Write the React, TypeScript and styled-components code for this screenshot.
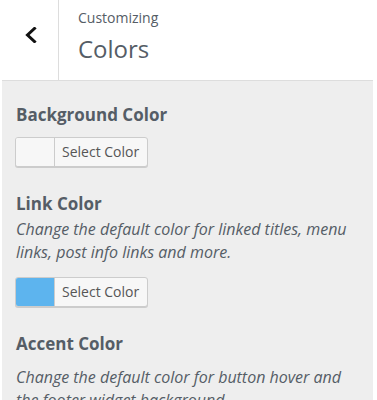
import React from "react";
import styled, { createGlobalStyle } from "styled-components";

const Global = createGlobalStyle`
  html, body { margin: 0; padding: 0; background: #fff; }
  body { font-family: "Open Sans", "Noto Sans", Arial, sans-serif; overflow: hidden; }
`;

const Panel = styled.div`
  margin-left: 2px;
  width: 371px;
  display: flex;
  flex-direction: column;
`;

const Header = styled.header`
  flex: none;
  display: flex;
  height: 80px;
  background: #fff;
  border-bottom: 1px solid #dddddd;
`;

const BackButton = styled.button`
  width: 57px;
  flex: none;
  padding: 0 0 10px 2px;
  margin: 0;
  border: 0;
  border-right: 1px solid #dddddd;
  background: #fff;
  display: flex;
  align-items: center;
  justify-content: center;
`;

const TitleBlock = styled.div`
  padding: 8px 0 0 19px;
  display: flex;
  flex-direction: column;
`;

const Crumb = styled.span`
  font-size: 14px;
  line-height: 20px;
  color: #555d66;
`;

const Title = styled.h1`
  margin: 5px 0 0;
  font-size: 24px;
  line-height: 32px;
  font-weight: 400;
  color: #555d66;
`;

const Content = styled.div`
  background: #eeeeee;
  padding: 22px 13px 40px;
  display: flex;
  flex-direction: column;
  gap: 25px;
`;

const Section = styled.section`
  display: flex;
  flex-direction: column;
`;

const Heading = styled.h2`
  margin: 0 0 0 1px;
  font-size: 17px;
  line-height: 24px;
  font-weight: 700;
  color: #555d66;
`;

const Description = styled.p<{ $offset: number }>`
  margin: ${(p) => p.$offset}px 0 3px 1px;
  font-size: 16px;
  line-height: 23px;
  font-style: italic;
  color: #555d66;
`;

const ColorButton = styled.button`
  margin-top: 10px;
  align-self: flex-start;
  display: flex;
  height: 30px;
  padding: 0;
  border: 1px solid #cccccc;
  border-radius: 3px;
  box-shadow: 0 1px 0 #cccccc;
  background: #f7f7f7;
  overflow: hidden;
  font-family: inherit;
`;

const Swatch = styled.span<{ $color: string }>`
  width: 38px;
  background: ${(p) => p.$color};
  border-right: 1px solid #cccccc;
`;

const ButtonLabel = styled.span`
  padding: 0 8px 0 7px;
  font-size: 14px;
  line-height: 28px;
  color: #555555;
`;

const Chevron = () => (
  <svg width="12" height="16" viewBox="0 0 12 16">
    <polyline
      points="9.5,1.5 2.5,8 9.5,14.5"
      fill="none"
      stroke="#111"
      strokeWidth="3"
      strokeLinecap="square"
    />
  </svg>
);

type Item = { title: string; desc?: string; color: string; offset: number };

const items: Item[] = [
  { title: "Background Color", color: "#f7f7f7", offset: 0 },
  {
    title: "Link Color",
    desc: "Change the default color for linked titles, menu links, post info links and more.",
    color: "#5db4ee",
    offset: 2,
  },
  {
    title: "Accent Color",
    desc: "Change the default color for button hover and the footer widget background.",
    color: "#e0e0e0",
    offset: 10,
  },
];

export default function App() {
  return (
    <>
      <Global />
      <Panel>
        <Header>
          <BackButton aria-label="Back">
            <Chevron />
          </BackButton>
          <TitleBlock>
            <Crumb>Customizing</Crumb>
            <Title>Colors</Title>
          </TitleBlock>
        </Header>
        <Content>
          {items.map((it) => (
            <Section key={it.title}>
              <Heading>{it.title}</Heading>
              {it.desc && <Description $offset={it.offset}>{it.desc}</Description>}
              <ColorButton>
                <Swatch $color={it.color} />
                <ButtonLabel>Select Color</ButtonLabel>
              </ColorButton>
            </Section>
          ))}
        </Content>
      </Panel>
    </>
  );
}
